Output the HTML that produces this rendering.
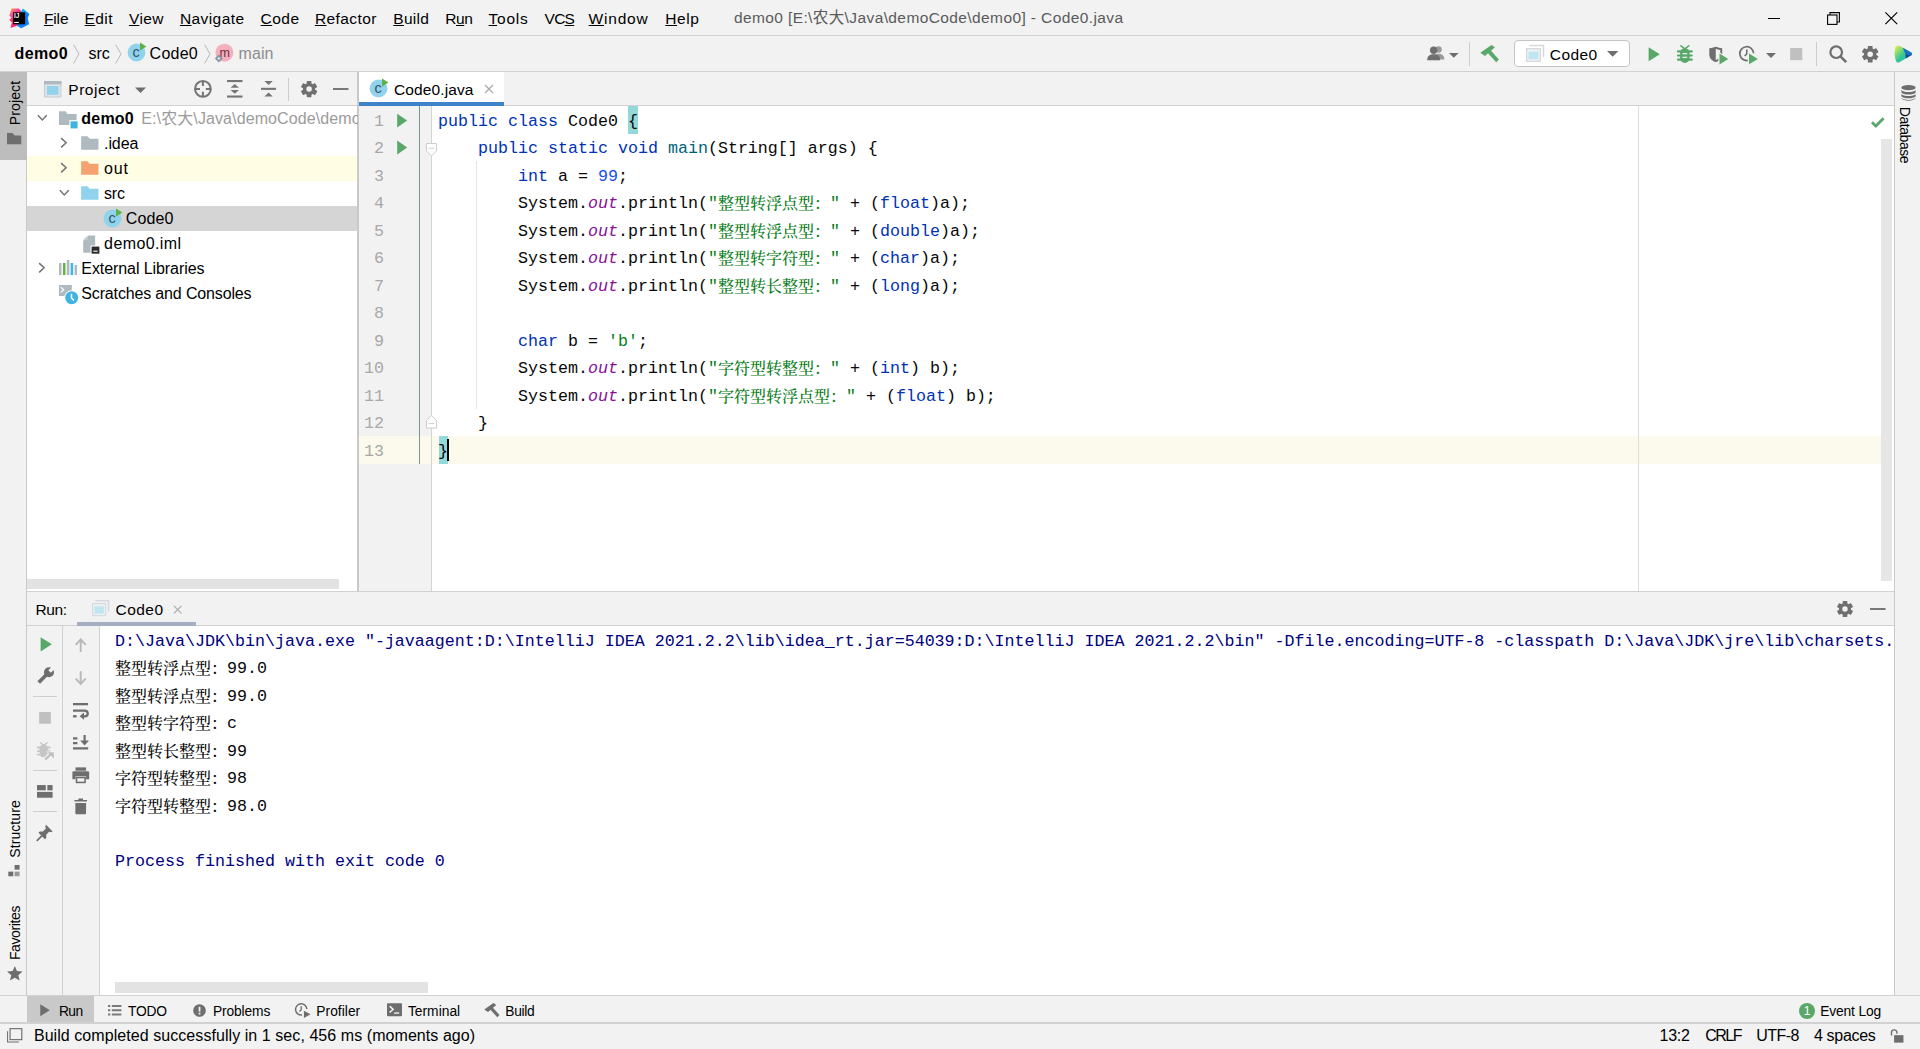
<!DOCTYPE html>
<html lang="zh-CN"><head><meta charset="utf-8"><title>demo0 - Code0.java</title><style>
*{box-sizing:border-box;margin:0;padding:0}
html,body{width:1920px;height:1049px;overflow:hidden;background:#f2f2f2}
body{position:relative;font-family:"Liberation Sans", "Noto Sans CJK SC", sans-serif;font-size:15.5px;color:#000}
div,svg,span{position:absolute}
svg{overflow:visible}
.t{white-space:pre;font-family:"Liberation Sans", "Noto Sans CJK SC", sans-serif}
.m{white-space:pre;font-family:"Liberation Mono", "Noto Serif CJK SC", monospace}
.m i,.m b,.m u,.m em,.m s{font-style:normal;font-weight:400;text-decoration:none;position:static}
.m .c{font-family:"Noto Serif CJK SC","Noto Sans CJK SC",serif;font-size:16px;line-height:0;vertical-align:-0.6px;font-weight:500}
.k{color:#0033b3}.n{color:#1750eb}.s{color:#067d17}.f{color:#871094;font-style:italic!important}.d{color:#00627a}
.ul{text-decoration:underline;text-decoration-thickness:1px;text-underline-offset:1px;position:static}
</style></head>
<body>
<div style="left:0px;top:35px;width:1920px;height:1px;background:#d1d1d1;"></div>
<svg style="left:8.75px;top:7.7px;" width="20.5" height="20.5" viewBox="0 0 20.5 20.5">
<defs>
<linearGradient id="lgw" x1="0" y1="0" x2="0.6" y2="1"><stop offset="0" stop-color="#fdb60d"/><stop offset=".35" stop-color="#ff45a8"/><stop offset=".6" stop-color="#fe2857"/><stop offset="1" stop-color="#ff318c"/></linearGradient>
<linearGradient id="lgb" x1="0.3" y1="0" x2="0.6" y2="1"><stop offset="0" stop-color="#07c3f2"/><stop offset=".5" stop-color="#087cfa"/><stop offset="1" stop-color="#0a8cf5"/></linearGradient>
</defs>
<path d="M2.6 0.4 L9.8 0.5 L12.4 3.3 L12.4 12 L8.1 17.7 L1.5 20.1 L2.9 14.3 L0.2 11.9 L2.6 9.5 L0.3 7.7 Z" fill="url(#lgw)"/>
<path d="M13.9 0.4 L20.4 6 L18.7 10.1 L20.1 16.3 L12.2 20.3 L8.1 17.7 L12.2 3.3 Z" fill="url(#lgb)"/>
<rect x="4.15" y="4.3" width="12" height="12" fill="#000"/>
<text x="4.9" y="10.2" font-size="6.4" font-weight="700" fill="#fff" font-family="Liberation Sans, sans-serif">IJ</text>
<rect x="5.2" y="13.9" width="4.6" height="1.1" fill="#fff"/>
</svg>
<span class="t" style="left:43.90px;top:8.70px;line-height:20px;font-size:15.5px;color:#000;letter-spacing:-0.096px;"><u class="ul">F</u>ile</span>
<span class="t" style="left:84.60px;top:8.70px;line-height:20px;font-size:15.5px;color:#000;letter-spacing:0.395px;"><u class="ul">E</u>dit</span>
<span class="t" style="left:128.90px;top:8.70px;line-height:20px;font-size:15.5px;color:#000;letter-spacing:0.418px;"><u class="ul">V</u>iew</span>
<span class="t" style="left:179.90px;top:8.70px;line-height:20px;font-size:15.5px;color:#000;letter-spacing:0.427px;"><u class="ul">N</u>avigate</span>
<span class="t" style="left:260.60px;top:8.70px;line-height:20px;font-size:15.5px;color:#000;letter-spacing:0.455px;"><u class="ul">C</u>ode</span>
<span class="t" style="left:314.90px;top:8.70px;line-height:20px;font-size:15.5px;color:#000;letter-spacing:0.426px;"><u class="ul">R</u>efactor</span>
<span class="t" style="left:393.30px;top:8.70px;line-height:20px;font-size:15.5px;color:#000;letter-spacing:0.283px;"><u class="ul">B</u>uild</span>
<span class="t" style="left:445.30px;top:8.70px;line-height:20px;font-size:15.5px;color:#000;letter-spacing:-0.418px;">R<u class="ul">u</u>n</span>
<span class="t" style="left:488.60px;top:8.70px;line-height:20px;font-size:15.5px;color:#000;letter-spacing:0.742px;"><u class="ul">T</u>ools</span>
<span class="t" style="left:544.60px;top:8.70px;line-height:20px;font-size:15.5px;color:#000;letter-spacing:-0.764px;">VC<u class="ul">S</u></span>
<span class="t" style="left:588.60px;top:8.70px;line-height:20px;font-size:15.5px;color:#000;letter-spacing:0.793px;"><u class="ul">W</u>indow</span>
<span class="t" style="left:665.30px;top:8.70px;line-height:20px;font-size:15.5px;color:#000;letter-spacing:0.577px;"><u class="ul">H</u>elp</span>
<span class="t" style="left:733.90px;top:7.60px;line-height:20px;font-size:15.5px;color:#5a5a5a;letter-spacing:0.397px;">demo0 [E:\农大\Java\demoCode\demo0] - Code0.java</span>
<div style="left:1768px;top:18px;width:12px;height:1px;background:#000;"></div>
<svg style="left:1826.5px;top:12px;" width="13" height="13" viewBox="0 0 13 13"><rect x=".6" y="3" width="9.4" height="9.4" fill="none" stroke="#000" stroke-width="1.1"/><path d="M3 3 V.6 H12.4 V10 H10" fill="none" stroke="#000" stroke-width="1.1"/></svg>
<svg style="left:1885px;top:11.6px;" width="12.6" height="12.6" viewBox="0 0 13 13"><path d="M.4 .4 L12.6 12.6 M12.6 .4 L.4 12.6" stroke="#000" stroke-width="1.2"/></svg>
<div style="left:0px;top:71px;width:1920px;height:1px;background:#d1d1d1;"></div>
<span class="t" style="left:14.60px;top:43.60px;line-height:20px;font-size:16px;color:#000;font-weight:700;letter-spacing:0.344px;">demo0</span>
<svg style="left:73px;top:43.6px;" width="7" height="20" viewBox="0 0 7 20"><path d="M0.6 0.6 L6 10 L0.6 19.4" fill="none" stroke="#b9b9b9" stroke-width="1"/></svg>
<span class="t" style="left:88.60px;top:43.60px;line-height:20px;font-size:16px;color:#000;letter-spacing:-0.143px;">src</span>
<svg style="left:115px;top:43.6px;" width="7" height="20" viewBox="0 0 7 20"><path d="M0.6 0.6 L6 10 L0.6 19.4" fill="none" stroke="#b9b9b9" stroke-width="1"/></svg>
<svg style="left:126.5px;top:42.4px;" width="20" height="20" viewBox="0 0 20 20">
<circle cx="9.5" cy="10.5" r="8.9" fill="#8fd3ec"/>
<text x="9.1" y="15" font-size="14.5" text-anchor="middle" fill="#3a5465" font-family="Liberation Sans, sans-serif">c</text>
<path d="M13 0.4 L19.4 4.5 L13 8.5 Z" fill="#5fb048"/>
</svg>
<span class="t" style="left:149.60px;top:43.60px;line-height:20px;font-size:16px;color:#000;letter-spacing:0.229px;">Code0</span>
<svg style="left:204px;top:43.6px;" width="7" height="20" viewBox="0 0 7 20"><path d="M0.6 0.6 L6 10 L0.6 19.4" fill="none" stroke="#b9b9b9" stroke-width="1"/></svg>
<svg style="left:214.4px;top:43.2px;" width="20" height="20" viewBox="0 0 20 20">
<circle cx="10.4" cy="9.7" r="9" fill="#f5afbe"/>
<text x="10.6" y="13.9" font-size="12.5" text-anchor="middle" fill="#6b2f3a" font-family="Liberation Sans, sans-serif">m</text>
<path d="M0.8 15.5 L4.8 11.5 L8.8 15.5 L4.8 19.5 Z" fill="#8796a1"/>
<path d="M3.2 15.5 L4.8 13.9 L6.4 15.5 L4.8 17.1 Z" fill="#e4e7ea"/>
</svg>
<span class="t" style="left:238.60px;top:43.60px;line-height:20px;font-size:16px;color:#8c8c8c;letter-spacing:0.053px;">main</span>
<svg style="left:1427px;top:46.4px;" width="18" height="14.6" viewBox="0 0 18 15">
<circle cx="11.6" cy="3.6" r="3.3" fill="#9a9a9a"/><path d="M7 14 C7 9.5 9 8 11.6 8 C14.5 8 17.6 9.5 17.6 14 Z" fill="#9a9a9a"/>
<circle cx="6.6" cy="4.4" r="3.8" fill="#6e6e6e"/><path d="M0 14.6 C0 10 3 8.6 6.6 8.6 C10.2 8.6 13.2 10 13.2 14.6 Z" fill="#6e6e6e"/>
</svg>
<svg style="left:1449.4px;top:53px;" width="9.6" height="4.8" viewBox="0 0 10 5"><path d="M0 0 H10 L5 5 Z" fill="#6e6e6e"/></svg>
<div style="left:1469px;top:42px;width:1px;height:24px;background:#cdcdcd;"></div>
<svg style="left:1479.9px;top:44.85px;" width="19" height="18" viewBox="0 0 19 18"><path d="M0.3 7.8 L11.5 0 L15 2.2 L4.9 10.9 Z" fill="#59a869"/><path d="M7.3 7.4 L10 4.6 L18.9 14.6 L16.2 17.3 Z" fill="#59a869"/></svg>
<div style="left:1514px;top:40px;width:116px;height:27px;background:#fff;border:1px solid #c4c4c4;border-radius:4px;"></div>
<svg style="left:1526px;top:45px;" width="18" height="17" viewBox="0 0 18 17">
<path d="M3.5 0.5 H17.5 V12" fill="none" stroke="#d4d9dd" stroke-width="1.6"/>
<rect x="0.6" y="3.6" width="13.8" height="12.8" fill="#eef1f3" stroke="#d4d9dd" stroke-width="1.2"/>
<rect x="2.6" y="6.6" width="9.8" height="7.6" fill="#bfe5f3"/>
</svg>
<span class="t" style="left:1549.80px;top:45.40px;line-height:20px;font-size:15.5px;color:#000;letter-spacing:0.402px;">Code0</span>
<svg style="left:1606.8px;top:51.4px;" width="11.4" height="5.8" viewBox="0 0 10 5"><path d="M0 0 H10 L5 5 Z" fill="#6e6e6e"/></svg>
<svg style="left:1648px;top:46.6px;" width="12.4" height="14.6" viewBox="0 0 12 15"><path d="M0.3 0.3 L11.8 7.5 L0.3 14.7 Z" fill="#59a869"/></svg>
<svg style="left:1677.3px;top:45.1px;" width="15.7" height="17.9" viewBox="0 0 15.7 17.9">
<path d="M3.9 0.8 L7.85 3.8 L11.8 0.8" fill="none" stroke="#59a869" stroke-width="1.6" stroke-linecap="round"/>
<path d="M0.9 6.4 H14.8 M0.9 10.5 H14.8 M0.9 14.6 H14.8" stroke="#59a869" stroke-width="2.1" stroke-linecap="round"/>
<rect x="3.1" y="3.2" width="9.5" height="14.7" rx="4.7" fill="#59a869"/>
<path d="M5.5 8.55 H10.2 M5.5 12.3 H10.2" stroke="#f2f2f2" stroke-width="1.25"/>
</svg>
<svg style="left:1708.6px;top:45.6px;" width="20" height="19" viewBox="0 0 20 19">
<path d="M0.3 2.2 C3.6 2.2 5.4 0.8 6.75 0.8 C8.1 0.8 9.9 2.2 13.2 2.2 V8.4 C13.2 12.4 10 15 6.75 16.1 C3.5 15 0.3 12.4 0.3 8.4 Z" fill="#6e6e6e"/>
<path d="M6.75 2.8 C7.8 3.1 9.2 3.9 11.3 4 V8.4 C11.3 10.8 9.2 13 6.75 14 Z" fill="#f2f2f2"/>
<path d="M9.3 5.4 L9.3 19.6 L21 12.9 Z" fill="#f2f2f2"/>
<path d="M10.5 7.4 L19.3 12.9 L10.5 18.4 Z" fill="#59a869"/>
</svg>
<svg style="left:1739px;top:45.6px;" width="20" height="19" viewBox="0 0 20 19">
<path d="M9 14.4 A6.9 6.9 0 1 1 14.6 7.2" fill="none" stroke="#6e6e6e" stroke-width="1.7"/>
<path d="M7.8 3.6 V8 L5.6 10" fill="none" stroke="#6e6e6e" stroke-width="1.6"/>
<path d="M8.8 5.7 L8.8 19.6 L20.6 12.9 Z" fill="#f2f2f2"/>
<path d="M10 7.6 L18.9 12.9 L10 18.3 Z" fill="#59a869"/>
</svg>
<svg style="left:1766px;top:53px;" width="10" height="5" viewBox="0 0 10 5"><path d="M0 0 H10 L5 5 Z" fill="#6e6e6e"/></svg>
<svg style="left:1790px;top:48px;" width="12.4" height="12.2" viewBox="0 0 12 12"><rect width="12" height="12" fill="#c0c0c0"/></svg>
<div style="left:1816px;top:42px;width:1px;height:24px;background:#cdcdcd;"></div>
<svg style="left:1829px;top:45px;" width="18" height="18" viewBox="0 0 18 18">
<circle cx="7.2" cy="7.2" r="5.8" fill="none" stroke="#6e6e6e" stroke-width="2.2"/>
<path d="M11.4 11.4 L17.2 17.2" stroke="#6e6e6e" stroke-width="2.6"/>
</svg>
<svg style="left:1862px;top:45.6px;" width="16.4" height="16.4" viewBox="0 0 16 16"><g transform="translate(8 8)"><rect x="-2.3" y="-8.1" width="4.6" height="4.4" rx="0.6" transform="rotate(0)" fill="#707070"/><rect x="-2.3" y="-8.1" width="4.6" height="4.4" rx="0.6" transform="rotate(60)" fill="#707070"/><rect x="-2.3" y="-8.1" width="4.6" height="4.4" rx="0.6" transform="rotate(120)" fill="#707070"/><rect x="-2.3" y="-8.1" width="4.6" height="4.4" rx="0.6" transform="rotate(180)" fill="#707070"/><rect x="-2.3" y="-8.1" width="4.6" height="4.4" rx="0.6" transform="rotate(240)" fill="#707070"/><rect x="-2.3" y="-8.1" width="4.6" height="4.4" rx="0.6" transform="rotate(300)" fill="#707070"/><circle r="4.4" fill="none" stroke="#707070" stroke-width="3.4"/></g></svg>
<svg style="left:1893.6px;top:44.8px;" width="18.6" height="18.2" viewBox="0 0 19 18">
<defs><linearGradient id="cg1" x1="0" y1="0" x2="1" y2="1"><stop offset="0" stop-color="#f3f04a"/><stop offset=".5" stop-color="#35c98f"/><stop offset="1" stop-color="#16b5d8"/></linearGradient></defs>
<path d="M1.5 1.4 C3 0.2 5 0.2 7 1.2 L17.6 7.4 C18.8 8.2 18.8 9.4 17.6 10.2 L5.5 17.4 C4 18.2 2.8 17.8 2.2 16.4 C0.2 11.5 0.2 6 1.5 1.4 Z" fill="url(#cg1)"/>
<path d="M9 2.4 L17.6 7.4 C18.6 8.1 18.8 9 18.2 9.8 L11.6 9 Z" fill="#1b6fc4"/>
<path d="M18.2 9.8 C18 10 17.8 10.1 17.6 10.2 L12 13.6 L11.6 9 Z" fill="#1948a0"/>
</svg>
<div style="left:26px;top:72px;width:1px;height:924px;background:#c9c9c9;"></div>
<div style="left:0px;top:72px;width:27px;height:87.5px;background:#bdbdbd;"></div>
<span class="t" style="left:14.9px;top:102.5px;line-height:20px;font-size:14px;color:#000;transform:translate(-50%,-50%) rotate(-90deg);letter-spacing:0.132px;">Project</span>
<svg style="left:7.2px;top:133.1px;" width="14.3" height="11.4" viewBox="0 0 14 11"><path d="M0 0 H5.4 L7.6 2.4 H14 V11 H0 Z" fill="#6e6e6e"/></svg>
<span class="t" style="left:14.9px;top:829px;line-height:20px;font-size:14px;color:#000;transform:translate(-50%,-50%) rotate(-90deg);letter-spacing:0.076px;">Structure</span>
<svg style="left:8.4px;top:865px;" width="12.2" height="11.6" viewBox="0 0 14 14">
<rect x="7.6" y="0" width="6" height="5.6" fill="#6e6e6e"/><rect x="0" y="8" width="6" height="5.6" fill="#6e6e6e"/><rect x="7.6" y="8" width="6" height="5.6" fill="#9a9a9a"/>
</svg>
<span class="t" style="left:14.9px;top:932.7px;line-height:20px;font-size:14px;color:#000;transform:translate(-50%,-50%) rotate(-90deg);letter-spacing:-0.375px;">Favorites</span>
<svg style="left:6.9px;top:965.6px;" width="15.6" height="14.6" viewBox="0 0 16 15"><path d="M8 0 L10.2 5.2 L16 5.7 L11.6 9.5 L13 15 L8 12 L3 15 L4.4 9.5 L0 5.7 L5.8 5.2 Z" fill="#6e6e6e"/></svg>
<div style="left:1894px;top:72px;width:1px;height:924px;background:#c9c9c9;"></div>
<svg style="left:1900.6px;top:84.8px;" width="15" height="15.6" viewBox="0 0 15 16">
<ellipse cx="7.5" cy="2.8" rx="7.3" ry="2.7" fill="#6e6e6e"/>
<path d="M0.2 5.2 C2 8 13 8 14.8 5.2 V7.6 C13 10.4 2 10.4 0.2 7.6 Z" fill="#6e6e6e"/>
<path d="M0.2 9.2 C2 12 13 12 14.8 9.2 V11.6 C13 14.4 2 14.4 0.2 11.6 Z" fill="#6e6e6e"/>
<path d="M0.2 13.2 C2 16 13 16 14.8 13.2 V13.6 C13 17 2 17 0.2 13.6 Z" fill="#6e6e6e"/>
</svg>
<span class="t" style="left:1905.4px;top:134.6px;line-height:20px;font-size:14px;color:#000;transform:translate(-50%,-50%) rotate(90deg);letter-spacing:-0.455px;">Database</span>
<div style="left:27px;top:106px;width:330px;height:485px;background:#fff;"></div>
<div style="left:27px;top:105px;width:330px;height:1px;background:#d1d1d1;"></div>
<div style="left:357px;top:72px;width:2px;height:519px;background:#c9c9c9;"></div>
<svg style="left:44px;top:81.4px;" width="17.4" height="16.6" viewBox="0 0 18 17">
<rect x="0.5" y="0.5" width="17" height="16" fill="#dfe3e6" stroke="#c3cbd1"/>
<rect x="0" y="0" width="18" height="3.4" fill="#aeb9c0"/>
<rect x="3" y="5.2" width="12" height="9" fill="#92d3ec"/>
</svg>
<span class="t" style="left:68.30px;top:80.00px;line-height:20px;font-size:15.5px;color:#000;letter-spacing:0.521px;">Project</span>
<svg style="left:135.4px;top:87px;" width="11" height="6.4" viewBox="0 0 10 5"><path d="M0 0 H10 L5 5 Z" fill="#6e6e6e"/></svg>
<svg style="left:194.1px;top:80.1px;" width="17.8" height="17.8" viewBox="0 0 17.8 17.8">
<circle cx="8.9" cy="8.9" r="7.85" fill="none" stroke="#757575" stroke-width="2.1"/>
<path d="M8.9 1 V6 M8.9 11.8 V16.8 M1 8.9 H6 M11.8 8.9 H16.8" stroke="#757575" stroke-width="2"/>
</svg>
<svg style="left:227.2px;top:80.2px;" width="15.5" height="17.6" viewBox="0 0 15.5 17.6">
<rect x="0" y="0" width="15.5" height="2.1" fill="#757575"/>
<rect x="0" y="15.5" width="15.5" height="2.1" fill="#757575"/>
<path d="M7.75 4 L12 7.8 H3.5 Z M7.75 13.8 L12 10 H3.5 Z" fill="#757575"/>
</svg>
<svg style="left:260.5px;top:81.2px;" width="15" height="15.6" viewBox="0 0 15 15.6">
<rect x="0" y="6.8" width="15" height="2.1" fill="#757575"/>
<path d="M3.4 0 H11.8 L7.6 4 Z M7.6 11.5 L11.8 15.6 H3.4 Z" fill="#757575"/>
</svg>
<div style="left:288px;top:78px;width:1px;height:23px;background:#cdcdcd;"></div>
<svg style="left:300.9px;top:80.9px;" width="16.2" height="16.2" viewBox="0 0 16 16"><g transform="translate(8 8)"><rect x="-2.3" y="-8.1" width="4.6" height="4.4" rx="0.6" transform="rotate(0)" fill="#707070"/><rect x="-2.3" y="-8.1" width="4.6" height="4.4" rx="0.6" transform="rotate(60)" fill="#707070"/><rect x="-2.3" y="-8.1" width="4.6" height="4.4" rx="0.6" transform="rotate(120)" fill="#707070"/><rect x="-2.3" y="-8.1" width="4.6" height="4.4" rx="0.6" transform="rotate(180)" fill="#707070"/><rect x="-2.3" y="-8.1" width="4.6" height="4.4" rx="0.6" transform="rotate(240)" fill="#707070"/><rect x="-2.3" y="-8.1" width="4.6" height="4.4" rx="0.6" transform="rotate(300)" fill="#707070"/><circle r="4.4" fill="none" stroke="#707070" stroke-width="3.4"/></g></svg>
<svg style="left:333.1px;top:88px;" width="15.5" height="2" viewBox="0 0 16 2"><rect width="16" height="2" fill="#757575"/></svg>
<div style="left:27px;top:156px;width:330px;height:25px;background:#fffee5;"></div>
<div style="left:27px;top:206px;width:330px;height:25px;background:#d5d5d5;"></div>
<svg style="left:37.4px;top:114.19999999999999px;" width="10.6" height="7.4" viewBox="0 0 12 8"><path d="M1 1.2 L6 6.6 L11 1.2" fill="none" stroke="#757575" stroke-width="1.7"/></svg>
<svg style="left:59px;top:110.0px;" width="18.6" height="18.6" viewBox="0 0 19 19"><path d="M0 1.2 H6.6 L8.8 4 H18 V15.4 H0 Z" fill="#aeb9c0"/><rect x="10.6" y="10.4" width="8.4" height="8.4" fill="#fff"/><rect x="11.8" y="11.6" width="7.2" height="7.2" fill="#3fb4e0"/></svg>
<span class="t" style="left:81.30px;top:108.60px;line-height:20px;font-size:16px;color:#000;font-weight:700;letter-spacing:0.204px;">demo0</span>
<div style="left:27px;top:106px;width:330px;height:25px;overflow:hidden"></div>
<span class="t" style="left:141.30px;top:108.60px;line-height:20px;font-size:16px;color:#9b9b9b;width:216.5px;overflow:hidden;letter-spacing:0.1px;">E:\农大\Java\demoCode\demo0</span>
<svg style="left:60.2px;top:137.2px;" width="7.4" height="11.6" viewBox="0 0 8 12"><path d="M1.2 1 L6.6 6 L1.2 11" fill="none" stroke="#757575" stroke-width="1.7"/></svg>
<svg style="left:81px;top:135.0px;" width="17.6" height="15.4" viewBox="0 0 18 16"><path d="M0 1.2 H6.6 L8.8 4 H18 V15.4 H0 Z" fill="#aeb9c0"/></svg>
<span class="t" style="left:104.10px;top:133.60px;line-height:20px;font-size:16px;color:#000;letter-spacing:-0.121px;">.idea</span>
<svg style="left:60.2px;top:162.2px;" width="7.4" height="11.6" viewBox="0 0 8 12"><path d="M1.2 1 L6.6 6 L1.2 11" fill="none" stroke="#757575" stroke-width="1.7"/></svg>
<svg style="left:81px;top:160.0px;" width="17.6" height="15.4" viewBox="0 0 18 16"><path d="M0 1.2 H6.6 L8.8 4 H18 V15.4 H0 Z" fill="#f4a26f"/></svg>
<span class="t" style="left:104.10px;top:158.60px;line-height:20px;font-size:16px;color:#000;letter-spacing:0.850px;">out</span>
<svg style="left:58.8px;top:189.2px;" width="10.6" height="7.4" viewBox="0 0 12 8"><path d="M1 1.2 L6 6.6 L11 1.2" fill="none" stroke="#757575" stroke-width="1.7"/></svg>
<svg style="left:81px;top:185.0px;" width="17.6" height="15.4" viewBox="0 0 18 16"><path d="M0 1.2 H6.6 L8.8 4 H18 V15.4 H0 Z" fill="#8fd3ec"/></svg>
<span class="t" style="left:104.10px;top:183.60px;line-height:20px;font-size:16px;color:#000;letter-spacing:-0.243px;">src</span>
<svg style="left:103.2px;top:207.9px;" width="20" height="20" viewBox="0 0 20 20">
<circle cx="9.5" cy="10.5" r="8.9" fill="#8fd3ec"/>
<text x="9.1" y="15" font-size="14.5" text-anchor="middle" fill="#3a5465" font-family="Liberation Sans, sans-serif">c</text>
<path d="M13 0.4 L19.4 4.5 L13 8.5 Z" fill="#5fb048"/>
</svg>
<span class="t" style="left:125.80px;top:208.60px;line-height:20px;font-size:16px;color:#000;letter-spacing:0.089px;">Code0</span>
<svg style="left:83.4px;top:234.9px;" width="16.8" height="19" viewBox="0 0 17 19">
<path d="M5.6 0.3 H12.3 V17.8 H0.2 V5.7 Z" fill="#aeb9c0"/>
<path d="M4.6 0.3 V4.7 H0.2 Z" fill="#c9d1d6"/>
<rect x="7.6" y="10.5" width="9.2" height="8.5" fill="#fff"/>
<rect x="8.7" y="11.6" width="7.9" height="7.2" fill="#2b2b2b"/>
<rect x="10.4" y="15.6" width="4.4" height="1.5" fill="#c8c8c8"/>
</svg>
<span class="t" style="left:104.10px;top:233.60px;line-height:20px;font-size:16px;color:#000;letter-spacing:0.387px;">demo0.iml</span>
<svg style="left:37.6px;top:262.20000000000005px;" width="7.4" height="11.6" viewBox="0 0 8 12"><path d="M1.2 1 L6.6 6 L1.2 11" fill="none" stroke="#757575" stroke-width="1.7"/></svg>
<svg style="left:58.9px;top:260px;" width="18" height="15" viewBox="0 0 18 15">
<rect x="0" y="3" width="2.5" height="12" fill="#aeb9c0"/>
<rect x="4" y="3" width="2.5" height="12" fill="#62b543"/>
<rect x="7.8" y="0" width="2.6" height="15" fill="#aeb9c0"/>
<rect x="11.6" y="3" width="2.6" height="12" fill="#40b6e0"/>
<rect x="15.6" y="5" width="2.4" height="10" fill="#aeb9c0"/>
</svg>
<span class="t" style="left:81.30px;top:258.60px;line-height:20px;font-size:16px;color:#000;letter-spacing:-0.078px;">External Libraries</span>
<svg style="left:58.9px;top:285px;" width="19.2" height="19.2" viewBox="0 0 19.2 19.2">
<path d="M0 0 H12.8 V6 L6 11 H0 Z" fill="#aeb9c0"/>
<path d="M1.8 2.2 L4.8 4.8 L1.8 7.4" fill="none" stroke="#fff" stroke-width="1.2"/>
<circle cx="12.7" cy="12.7" r="7.5" fill="#fff"/>
<circle cx="12.7" cy="12.7" r="6.5" fill="#3fb4e0"/>
<path d="M12.5 8.8 V13 L15 15.6" fill="none" stroke="#fff" stroke-width="1.5"/>
</svg>
<span class="t" style="left:81.30px;top:283.60px;line-height:20px;font-size:16px;color:#000;letter-spacing:-0.152px;">Scratches and Consoles</span>
<div style="left:27px;top:579px;width:330px;height:12px;background:#fff;"></div>
<div style="left:27px;top:579px;width:312px;height:10px;background:#e2e2e2;"></div>
<div style="left:27px;top:591px;width:1867px;height:1px;background:#d1d1d1;"></div>
<div style="left:359px;top:105px;width:1535px;height:1px;background:#d1d1d1;"></div>
<div style="left:359px;top:72px;width:145px;height:30px;background:#fff;"></div>
<div style="left:359px;top:102px;width:145px;height:4px;background:#4083c9;"></div>
<svg style="left:369.1px;top:78px;" width="20" height="20" viewBox="0 0 20 20">
<circle cx="9.5" cy="10.5" r="8.9" fill="#8fd3ec"/>
<text x="9.1" y="15" font-size="14.5" text-anchor="middle" fill="#3a5465" font-family="Liberation Sans, sans-serif">c</text>
<path d="M13 0.4 L19.4 4.5 L13 8.5 Z" fill="#5fb048"/>
</svg>
<span class="t" style="left:394.00px;top:80.00px;line-height:20px;font-size:15.5px;color:#000;letter-spacing:0.108px;">Code0.java</span>
<svg style="left:484px;top:84px;" width="10" height="10" viewBox="0 0 10 10"><path d="M1 1 L9 9 M9 1 L1 9" stroke="#a8a8a8" stroke-width="1.2" fill="none"/></svg>
<div style="left:359px;top:106px;width:1535px;height:485px;background:#fff;"></div>
<div style="left:359px;top:106px;width:72px;height:485px;background:#f2f2f2;"></div>
<div style="left:419px;top:106px;width:1px;height:358px;background:#6f9a97;"></div>
<div style="left:431px;top:106px;width:1px;height:485px;background:#d4d4d4;"></div>
<div style="left:359px;top:436.0px;width:60px;height:28px;background:#fcfaed;"></div>
<div style="left:420px;top:436.0px;width:11px;height:28px;background:#fcfaed;"></div>
<div style="left:432px;top:436.0px;width:1449px;height:28px;background:#fcfaed;"></div>
<div style="left:1638px;top:106px;width:1px;height:485px;background:#dedede;"></div>
<div style="left:1881px;top:139px;width:11px;height:442px;background:#e6e6e6;"></div>
<svg style="left:1871px;top:117px;" width="13.6" height="10.8" viewBox="0 0 14 11"><path d="M1 5.4 L5 9.2 L13 1.2" fill="none" stroke="#59a869" stroke-width="2.9"/></svg>
<div style="left:476px;top:161.0px;width:1px;height:247.5px;background:#e4e4e4;"></div>
<div style="left:628px;top:106px;width:10px;height:27.5px;background:#93d9d9;"></div>
<div style="left:438.5px;top:436.0px;width:9.5px;height:28px;background:#93d9d9;"></div>
<div style="left:447px;top:439px;width:2px;height:22px;background:#000;"></div>
<span class="m" style="left:-0.40px;top:107.70px;line-height:27.5px;font-size:16.67px;color:#a8a8a8;left:344px;width:40px;text-align:right;">1</span>
<span class="m" style="left:438.00px;top:107.70px;line-height:27.5px;font-size:16.67px;color:#080808;"><b class="k">public class</b> Code0 {</span>
<span class="m" style="left:-0.40px;top:135.20px;line-height:27.5px;font-size:16.67px;color:#a8a8a8;left:344px;width:40px;text-align:right;">2</span>
<span class="m" style="left:438.00px;top:135.20px;line-height:27.5px;font-size:16.67px;color:#080808;">    <b class="k">public static void</b> <b class="d">main</b>(String[] args) {</span>
<span class="m" style="left:-0.40px;top:162.70px;line-height:27.5px;font-size:16.67px;color:#a8a8a8;left:344px;width:40px;text-align:right;">3</span>
<span class="m" style="left:438.00px;top:162.70px;line-height:27.5px;font-size:16.67px;color:#080808;">        <b class="k">int</b> a = <b class="n">99</b>;</span>
<span class="m" style="left:-0.40px;top:190.20px;line-height:27.5px;font-size:16.67px;color:#a8a8a8;left:344px;width:40px;text-align:right;">4</span>
<span class="m" style="left:438.00px;top:190.20px;line-height:27.5px;font-size:16.67px;color:#080808;">        System.<em class="f">out</em>.println(<b class="s">"<i class="c">整型转浮点型：</i>"</b> + (<b class="k">float</b>)a);</span>
<span class="m" style="left:-0.40px;top:217.70px;line-height:27.5px;font-size:16.67px;color:#a8a8a8;left:344px;width:40px;text-align:right;">5</span>
<span class="m" style="left:438.00px;top:217.70px;line-height:27.5px;font-size:16.67px;color:#080808;">        System.<em class="f">out</em>.println(<b class="s">"<i class="c">整型转浮点型：</i>"</b> + (<b class="k">double</b>)a);</span>
<span class="m" style="left:-0.40px;top:245.20px;line-height:27.5px;font-size:16.67px;color:#a8a8a8;left:344px;width:40px;text-align:right;">6</span>
<span class="m" style="left:438.00px;top:245.20px;line-height:27.5px;font-size:16.67px;color:#080808;">        System.<em class="f">out</em>.println(<b class="s">"<i class="c">整型转字符型：</i>"</b> + (<b class="k">char</b>)a);</span>
<span class="m" style="left:-0.40px;top:272.70px;line-height:27.5px;font-size:16.67px;color:#a8a8a8;left:344px;width:40px;text-align:right;">7</span>
<span class="m" style="left:438.00px;top:272.70px;line-height:27.5px;font-size:16.67px;color:#080808;">        System.<em class="f">out</em>.println(<b class="s">"<i class="c">整型转长整型：</i>"</b> + (<b class="k">long</b>)a);</span>
<span class="m" style="left:-0.40px;top:300.20px;line-height:27.5px;font-size:16.67px;color:#a8a8a8;left:344px;width:40px;text-align:right;">8</span>
<span class="m" style="left:-0.40px;top:327.70px;line-height:27.5px;font-size:16.67px;color:#a8a8a8;left:344px;width:40px;text-align:right;">9</span>
<span class="m" style="left:438.00px;top:327.70px;line-height:27.5px;font-size:16.67px;color:#080808;">        <b class="k">char</b> b = <b class="s">'b'</b>;</span>
<span class="m" style="left:-0.40px;top:355.20px;line-height:27.5px;font-size:16.67px;color:#a8a8a8;left:344px;width:40px;text-align:right;">10</span>
<span class="m" style="left:438.00px;top:355.20px;line-height:27.5px;font-size:16.67px;color:#080808;">        System.<em class="f">out</em>.println(<b class="s">"<i class="c">字符型转整型：</i>"</b> + (<b class="k">int</b>) b);</span>
<span class="m" style="left:-0.40px;top:382.70px;line-height:27.5px;font-size:16.67px;color:#a8a8a8;left:344px;width:40px;text-align:right;">11</span>
<span class="m" style="left:438.00px;top:382.70px;line-height:27.5px;font-size:16.67px;color:#080808;">        System.<em class="f">out</em>.println(<b class="s">"<i class="c">字符型转浮点型：</i>"</b> + (<b class="k">float</b>) b);</span>
<span class="m" style="left:-0.40px;top:410.20px;line-height:27.5px;font-size:16.67px;color:#a8a8a8;left:344px;width:40px;text-align:right;">12</span>
<span class="m" style="left:438.00px;top:410.20px;line-height:27.5px;font-size:16.67px;color:#080808;">    }</span>
<span class="m" style="left:-0.40px;top:437.70px;line-height:27.5px;font-size:16.67px;color:#a8a8a8;left:344px;width:40px;text-align:right;">13</span>
<span class="m" style="left:438.00px;top:437.70px;line-height:27.5px;font-size:16.67px;color:#080808;">}</span>
<svg style="left:396.9px;top:112.7px;" width="10.4" height="15.2" viewBox="0 0 11 15"><path d="M0.2 0.2 L10.8 7.5 L0.2 14.8 Z" fill="#59a869"/></svg>
<svg style="left:396.9px;top:140.2px;" width="10.4" height="15" viewBox="0 0 11 15"><path d="M0.2 0.2 L10.8 7.5 L0.2 14.8 Z" fill="#59a869"/></svg>
<svg style="left:426px;top:143.3px;" width="11" height="13.6" viewBox="0 0 11 13.6"><path d="M0.5 0.5 H10.5 V8 L5.5 13 L0.5 8 Z" fill="#fff" stroke="#cdcdcd"/><path d="M2.6 5.2 H8.4" stroke="#cdcdcd"/></svg>
<svg style="left:426px;top:414.6px;" width="11" height="13.6" viewBox="0 0 11 13.6"><path d="M0.5 13.1 H10.5 V5.6 L5.5 0.6 L0.5 5.6 Z" fill="#fff" stroke="#cdcdcd"/><path d="M2.6 8.6 H8.4" stroke="#cdcdcd"/></svg>
<div style="left:27px;top:625px;width:1867px;height:1px;background:#d1d1d1;"></div>
<span class="t" style="left:35.60px;top:600.00px;line-height:20px;font-size:15.5px;color:#000;letter-spacing:-0.437px;">Run:</span>
<svg style="left:92.4px;top:600.4px;" width="17" height="16.4" viewBox="0 0 18 17">
<path d="M3.5 0.5 H17.5 V12" fill="none" stroke="#d4d9dd" stroke-width="1.6"/>
<rect x="0.6" y="3.6" width="13.8" height="12.8" fill="#eef1f3" stroke="#d4d9dd" stroke-width="1.2"/>
<rect x="2.6" y="6.6" width="9.8" height="7.6" fill="#bfe5f3"/>
</svg>
<span class="t" style="left:115.60px;top:600.00px;line-height:20px;font-size:15.5px;color:#000;letter-spacing:0.443px;">Code0</span>
<svg style="left:173.4px;top:604.6px;" width="9.4" height="9.4" viewBox="0 0 10 10"><path d="M1 1 L9 9 M9 1 L1 9" stroke="#a8a8a8" stroke-width="1.2" fill="none"/></svg>
<div style="left:77px;top:622px;width:119px;height:4px;background:#a4afc2;"></div>
<svg style="left:1837.4px;top:601.4px;" width="16" height="16" viewBox="0 0 16 16"><g transform="translate(8 8)"><rect x="-2.3" y="-8.1" width="4.6" height="4.4" rx="0.6" transform="rotate(0)" fill="#707070"/><rect x="-2.3" y="-8.1" width="4.6" height="4.4" rx="0.6" transform="rotate(60)" fill="#707070"/><rect x="-2.3" y="-8.1" width="4.6" height="4.4" rx="0.6" transform="rotate(120)" fill="#707070"/><rect x="-2.3" y="-8.1" width="4.6" height="4.4" rx="0.6" transform="rotate(180)" fill="#707070"/><rect x="-2.3" y="-8.1" width="4.6" height="4.4" rx="0.6" transform="rotate(240)" fill="#707070"/><rect x="-2.3" y="-8.1" width="4.6" height="4.4" rx="0.6" transform="rotate(300)" fill="#707070"/><circle r="4.4" fill="none" stroke="#707070" stroke-width="3.4"/></g></svg>
<svg style="left:1870px;top:608.4px;" width="15.6" height="2" viewBox="0 0 16 2"><rect width="16" height="2" fill="#757575"/></svg>
<div style="left:62px;top:626px;width:1px;height:369px;background:#d1d1d1;"></div>
<div style="left:99px;top:626px;width:1px;height:369px;background:#d1d1d1;"></div>
<div style="left:100px;top:626px;width:1794px;height:369px;background:#fff;"></div>
<svg style="left:40.1px;top:636.7px;" width="12.4" height="14.7" viewBox="0 0 12 15"><path d="M0.3 0.3 L11.8 7.5 L0.3 14.7 Z" fill="#59a869"/></svg>
<svg style="left:36.9px;top:667.2px;" width="17.2" height="17.2" viewBox="0 0 17.2 17.2">
<path d="M1.7 15.5 L10.4 6.8" stroke="#6e6e6e" stroke-width="3.7"/>
<circle cx="12" cy="5.2" r="5" fill="#6e6e6e"/>
<path d="M12.6 4.6 L18.4 -1.2" stroke="#f2f2f2" stroke-width="3.6"/>
</svg>
<div style="left:33px;top:696px;width:24px;height:1px;background:#cdcdcd;"></div>
<svg style="left:39px;top:712.3px;" width="12" height="11.7" viewBox="0 0 12 12"><rect width="12" height="12" fill="#c0c0c0"/></svg>
<svg style="left:37.3px;top:742px;" width="17.5" height="18" viewBox="0 0 17.5 18">
<g transform="scale(0.86)">
<path d="M3.9 0.8 L7.85 3.8 L11.8 0.8" fill="none" stroke="#c6c6c6" stroke-width="1.6" stroke-linecap="round"/>
<path d="M0.9 6.4 H14.8 M0.9 10.5 H14.8 M0.9 14.6 H14.8" stroke="#c6c6c6" stroke-width="2.1" stroke-linecap="round"/>
<rect x="3.1" y="3.2" width="9.5" height="14.7" rx="4.7" fill="#c6c6c6"/>
<path d="M5.5 8.55 H10.2 M5.5 12.3 H10.2" stroke="#c6c6c6" stroke-width="1.25"/>
</g>
<path d="M7.6 18.4 L14.4 11.6" stroke="#f2f2f2" stroke-width="5"/>
<path d="M9 9.4 H17.6 V18 Z" fill="#f2f2f2"/>
<path d="M8.2 17.6 L14.6 11.2" stroke="#c0c0c0" stroke-width="2.2"/>
<path d="M10.4 10.2 H16.8 V16.6 Z" fill="#c0c0c0"/>
</svg>
<div style="left:33px;top:770px;width:24px;height:1px;background:#cdcdcd;"></div>
<svg style="left:37.4px;top:784.6px;" width="15.6" height="12.8" viewBox="0 0 16 13">
<rect x="0" y="0" width="9" height="5.4" fill="#6e6e6e"/><rect x="10.6" y="0" width="5.4" height="5.4" fill="#6e6e6e"/>
<rect x="0" y="7" width="16" height="6" fill="#6e6e6e"/>
</svg>
<div style="left:33px;top:811px;width:24px;height:1px;background:#cdcdcd;"></div>
<svg style="left:36.4px;top:823.6px;" width="17.4" height="17.6" viewBox="0 0 18 18">
<path d="M10.4 0.8 L17.2 7.6 L15.6 8.4 L13.6 8 L10.6 11 L10.6 14.4 L9.2 15.6 L2.6 9 L3.8 7.6 L7.2 7.6 L10.2 4.6 L9.6 2.4 Z" fill="#6e6e6e"/>
<path d="M6 12.2 L0.8 17.4" stroke="#6e6e6e" stroke-width="1.7"/>
</svg>
<svg style="left:75.4px;top:638px;" width="11.4" height="14" viewBox="0 0 11.4 14"><path d="M5.7 14 V1.6 M0.7 6.8 L5.7 1.5 L10.7 6.8" fill="none" stroke="#b8b8b8" stroke-width="1.9"/></svg>
<svg style="left:75.4px;top:670.6px;" width="11.4" height="14.4" viewBox="0 0 11.4 14.4"><path d="M5.7 0.2 V12.8 M0.7 7.6 L5.7 12.9 L10.7 7.6" fill="none" stroke="#b8b8b8" stroke-width="1.9"/></svg>
<svg style="left:73.3px;top:702.6px;" width="15.8" height="16.8" viewBox="0 0 15.8 16.8">
<path d="M0 1.15 H15" stroke="#6e6e6e" stroke-width="2.3"/>
<path d="M0 7.6 H11.6 C15.8 7.6 15.8 13.3 11.6 13.3 H10" fill="none" stroke="#6e6e6e" stroke-width="2.3"/>
<path d="M11 9.6 L6.6 13.3 L11 16.8 Z" fill="#6e6e6e"/>
<path d="M0 13.3 H3.6" stroke="#6e6e6e" stroke-width="2.3"/>
</svg>
<svg style="left:73.3px;top:734.5px;" width="15.2" height="14.6" viewBox="0 0 15.2 14.6">
<path d="M0 3.4 H4.4 M0 8.2 H4.4 M0 13.4 H15.2" stroke="#6e6e6e" stroke-width="2.2"/>
<path d="M11.6 0 V7" stroke="#6e6e6e" stroke-width="2.2"/><path d="M7.2 5.4 L11.6 10.6 L16 5.4 Z" fill="#6e6e6e"/>
</svg>
<svg style="left:72.4px;top:767px;" width="17.6" height="16.6" viewBox="0 0 18 17">
<rect x="3.6" y="0.4" width="10.8" height="3.4" fill="#6e6e6e"/>
<path d="M0.4 5.6 C0.4 4.8 1 4.4 1.6 4.4 H16.4 C17 4.4 17.6 4.8 17.6 5.6 V12.6 H14.4 V9.6 H3.6 V12.6 H0.4 Z" fill="#6e6e6e"/>
<rect x="4.6" y="10.8" width="8.8" height="5" fill="none" stroke="#6e6e6e" stroke-width="1.6"/>
</svg>
<svg style="left:74.4px;top:798.4px;" width="13.4" height="16.6" viewBox="0 0 14 17">
<path d="M4.6 0.4 H9.4 V1.8 H13.6 V3.6 H0.4 V1.8 H4.6 Z" fill="#6e6e6e"/>
<path d="M1.4 5 H12.6 V15.4 C12.6 16.2 12 16.8 11.2 16.8 H2.8 C2 16.8 1.4 16.2 1.4 15.4 Z" fill="#6e6e6e"/>
</svg>
<span class="m" style="left:115.00px;top:627.70px;line-height:27.5px;font-size:16.67px;color:#00007f;width:1779px;overflow:hidden;">D:\Java\JDK\bin\java.exe "-javaagent:D:\IntelliJ IDEA 2021.2.2\lib\idea_rt.jar=54039:D:\IntelliJ IDEA 2021.2.2\bin" -Dfile.encoding=UTF-8 -classpath D:\Java\JDK\jre\lib\charsets.jar;D:\Java\JDK\jre\lib\deploy.jar</span>
<span class="m" style="left:115.00px;top:655.20px;line-height:27.5px;font-size:16.67px;color:#080808;"><i class="c">整型转浮点型：</i>99.0</span>
<span class="m" style="left:115.00px;top:682.70px;line-height:27.5px;font-size:16.67px;color:#080808;"><i class="c">整型转浮点型：</i>99.0</span>
<span class="m" style="left:115.00px;top:710.20px;line-height:27.5px;font-size:16.67px;color:#080808;"><i class="c">整型转字符型：</i>c</span>
<span class="m" style="left:115.00px;top:737.70px;line-height:27.5px;font-size:16.67px;color:#080808;"><i class="c">整型转长整型：</i>99</span>
<span class="m" style="left:115.00px;top:765.20px;line-height:27.5px;font-size:16.67px;color:#080808;"><i class="c">字符型转整型：</i>98</span>
<span class="m" style="left:115.00px;top:792.70px;line-height:27.5px;font-size:16.67px;color:#080808;"><i class="c">字符型转整型：</i>98.0</span>
<span class="m" style="left:115.00px;top:847.70px;line-height:27.5px;font-size:16.67px;color:#00007f;">Process finished with exit code 0</span>
<div style="left:115px;top:982px;width:313px;height:11px;background:#e3e3e3;"></div>
<div style="left:0px;top:995px;width:1920px;height:1px;background:#d1d1d1;"></div>
<div style="left:27px;top:996px;width:67px;height:27px;background:#c9c9c9;"></div>
<svg style="left:40px;top:1004.4px;" width="10" height="12.6" viewBox="0 0 12 15"><path d="M0.3 0.3 L11.8 7.5 L0.3 14.7 Z" fill="#6e6e6e"/></svg>
<span class="t" style="left:58.90px;top:1002.00px;line-height:20px;font-size:13.8px;color:#000;letter-spacing:-0.571px;">Run</span>
<svg style="left:108.4px;top:1005px;" width="13.4" height="10.6" viewBox="0 0 14 11">
<path d="M0 1.1 H2.4 M0 5.5 H2.4 M0 9.9 H2.4 M4 1.1 H14 M4 5.5 H14 M4 9.9 H14" stroke="#7a7a7a" stroke-width="2.1"/>
</svg>
<span class="t" style="left:127.90px;top:1002.00px;line-height:20px;font-size:13.8px;color:#000;letter-spacing:-0.152px;">TODO</span>
<svg style="left:193.2px;top:1003.6px;" width="13" height="13" viewBox="0 0 14 14">
<circle cx="7" cy="7" r="6.8" fill="#6e6e6e"/><rect x="6.1" y="3" width="1.9" height="5.2" fill="#f2f2f2"/><rect x="6.1" y="9.4" width="1.9" height="1.9" fill="#f2f2f2"/>
</svg>
<span class="t" style="left:212.90px;top:1002.00px;line-height:20px;font-size:13.8px;color:#000;letter-spacing:-0.123px;">Problems</span>
<svg style="left:295px;top:1002.6px;" width="16" height="15.4" viewBox="0 0 17 16">
<path d="M7.4 12.6 A6 6 0 1 1 12.6 6.2" fill="none" stroke="#6e6e6e" stroke-width="1.5"/>
<path d="M6.6 3.4 V7 L4.8 8.8" fill="none" stroke="#6e6e6e" stroke-width="1.4"/>
<path d="M9.4 8 L16.6 11.8 L9.4 15.8 Z" fill="#6e6e6e"/>
</svg>
<span class="t" style="left:316.30px;top:1002.00px;line-height:20px;font-size:13.8px;color:#000;letter-spacing:0.025px;">Profiler</span>
<svg style="left:386.6px;top:1003.4px;" width="15" height="13.4" viewBox="0 0 16 14">
<rect width="16" height="14" rx="1" fill="#6e6e6e"/>
<path d="M2.8 3.2 L6.6 6.6 L2.8 10" fill="none" stroke="#f2f2f2" stroke-width="1.6"/><path d="M7.6 10.6 H13" stroke="#f2f2f2" stroke-width="1.5"/>
</svg>
<span class="t" style="left:407.90px;top:1002.00px;line-height:20px;font-size:13.8px;color:#000;letter-spacing:0.020px;">Terminal</span>
<svg style="left:484px;top:1002.6px;" width="15.6" height="15" viewBox="0 0 19 18"><path d="M0.3 7.8 L11.5 0 L15 2.2 L4.9 10.9 Z" fill="#6e6e6e"/><path d="M7.3 7.4 L10 4.6 L18.9 14.6 L16.2 17.3 Z" fill="#6e6e6e"/></svg>
<span class="t" style="left:505.30px;top:1002.00px;line-height:20px;font-size:13.8px;color:#000;letter-spacing:-0.298px;">Build</span>
<svg style="left:1799px;top:1003px;" width="16" height="16" viewBox="0 0 16 16">
<circle cx="8" cy="8" r="8" fill="#59a869"/>
<text x="8" y="12.4" font-size="12" text-anchor="middle" fill="#fff" font-family="Liberation Sans, sans-serif">1</text>
</svg>
<span class="t" style="left:1820.30px;top:1002.00px;line-height:20px;font-size:13.8px;color:#000;letter-spacing:-0.171px;">Event Log</span>
<div style="left:0px;top:1022px;width:1920px;height:2px;background:#d1d1d1;"></div>
<svg style="left:7.4px;top:1028.4px;" width="15.4" height="14.6" viewBox="0 0 16 15">
<path d="M0.6 3.4 V14.4 H12.4" fill="none" stroke="#6e6e6e" stroke-width="1.1"/>
<rect x="3.2" y="0.6" width="12.2" height="11.4" fill="none" stroke="#6e6e6e" stroke-width="1.2"/>
</svg>
<span class="t" style="left:33.90px;top:1026.20px;line-height:20px;font-size:16px;color:#000;letter-spacing:0.064px;">Build completed successfully in 1 sec, 456 ms (moments ago)</span>
<span class="t" style="left:1659.60px;top:1026.20px;line-height:20px;font-size:16px;color:#000;letter-spacing:-0.310px;">13:2</span>
<span class="t" style="left:1705.30px;top:1026.20px;line-height:20px;font-size:16px;color:#000;letter-spacing:-1.545px;">CRLF</span>
<span class="t" style="left:1756.30px;top:1026.20px;line-height:20px;font-size:16px;color:#000;letter-spacing:-0.546px;">UTF-8</span>
<span class="t" style="left:1813.90px;top:1026.20px;line-height:20px;font-size:16px;color:#000;letter-spacing:-0.306px;">4 spaces</span>
<svg style="left:1890px;top:1028.6px;" width="14" height="14" viewBox="0 0 15 15">
<path d="M1.6 7 V3.6 C1.6 0 7.4 0 7.4 3.6 V5" fill="none" stroke="#6e6e6e" stroke-width="1.5"/>
<rect x="4.4" y="6.6" width="10" height="8" fill="#6e6e6e"/>
</svg>
</body></html>
